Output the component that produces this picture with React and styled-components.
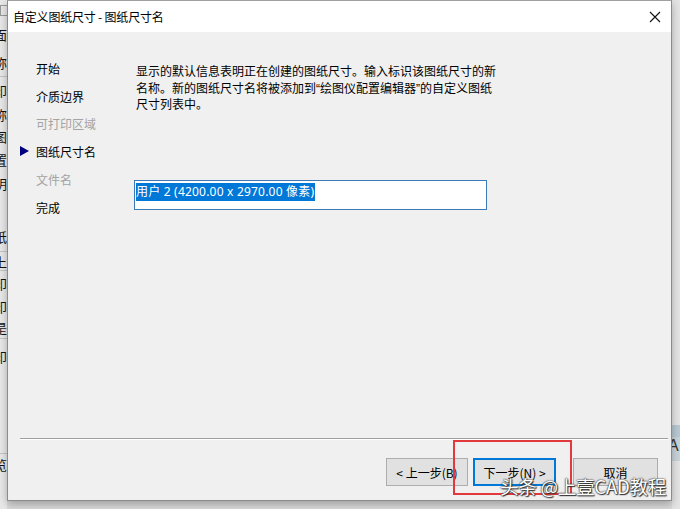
import React from 'react';
import styled, { createGlobalStyle } from 'styled-components';

const GlobalStyle = createGlobalStyle`
    html, body {
        margin: 0;
        padding: 0;
        background: #dcdcdc;
        font-family: "Noto Sans CJK SC", "Noto Sans", "Liberation Sans", sans-serif;
        font-size: 12px;
        color: #000;
    }
`;

const backdropRows = [
    { h: 20, t: '' , box: true },
    { h: 28, t: '面' },
    { h: 28, t: '称', line: true },
    { h: 27, t: '印' },
    { h: 20, t: '称' },
    { h: 24, t: '图' },
    { h: 23, t: '置' },
    { h: 25, t: '明' },
    { h: 25, t: '' },
    { h: 30, t: '纸', line: true },
    { h: 18, t: '上', line: true },
    { h: 25, t: '印' },
    { h: 20, t: '印' },
    { h: 22, t: '是', line: true },
    { h: 34, t: '印' },
    { h: 80, t: '', line: true },
    { h: 20, t: '览' },
];

const steps = [
    { label: '开始' },
    { label: '介质边界' },
    { label: '可打印区域', disabled: true },
    { label: '图纸尺寸名', current: true },
    { label: '文件名', disabled: true },
    { label: '完成' },
];

const App = () => {
    return (
        <>
            <GlobalStyle />
            <Page>
                <LeftStrip>
                    {backdropRows.map((r, i) => (
                        <BackRow key={i} $h={r.h} $line={r.line}>
                            {r.box ? <TinyBox /> : r.t}
                        </BackRow>
                    ))}
                </LeftStrip>

                <Dialog>
                    <TitleBar>
                        <Title>自定义图纸尺寸 - 图纸尺寸名</Title>
                        <CloseButton aria-label="close">
                            <svg width="12" height="12" viewBox="0 0 12 12">
                                <path d="M1 1 L11 11 M11 1 L1 11" stroke="#111" strokeWidth="1.1" fill="none" />
                            </svg>
                        </CloseButton>
                    </TitleBar>

                    <Body>
                        <Nav>
                            {steps.map((s) => (
                                <NavItem key={s.label} $disabled={s.disabled}>
                                    <Marker>
                                        {s.current && (
                                            <svg width="9" height="10" viewBox="0 0 9 10">
                                                <path d="M0 0 L9 5 L0 10 Z" fill="#00007f" />
                                            </svg>
                                        )}
                                    </Marker>
                                    {s.label}
                                </NavItem>
                            ))}
                        </Nav>

                        <Content>
                            <Description>
                                显示的默认信息表明正在创建的图纸尺寸。输入标识该图纸尺寸的新名称。新的图纸尺寸名将被添加到<Quote>“</Quote>绘图仪配置编辑器<Quote>”</Quote>的自定义图纸尺寸列表中。
                            </Description>
                            <NameInput>
                                <Selected>用户 2 (4200.00 x 2970.00 像素)</Selected>
                            </NameInput>
                        </Content>
                    </Body>

                    <Footer>
                        <Separator />
                        <ButtonRow>
                            <Button $w={82}>&lt; 上一步(B)</Button>
                            <Button $w={83} $default>下一步(N) &gt;</Button>
                            <Button $w={85} $gap={17}>取消</Button>
                        </ButtonRow>
                    </Footer>

                    <Highlight />
                    <Watermark>头条 @上壹CAD教程</Watermark>
                </Dialog>

                <RightStrip>
                    <RightBand />
                    <RightGlyph>A</RightGlyph>
                </RightStrip>
            </Page>
        </>
    );
}

const Page = styled.div`
    display: flex;
    width: 680px;
    height: 509px;
    overflow: hidden;
    background: #d9d9d9;
`;

const LeftStrip = styled.div`
    width: 7px;
    flex-shrink: 0;
    background: #e8e8e8;
    display: flex;
    flex-direction: column;
    overflow: hidden;
`;

const BackRow = styled.div`
    height: ${p => p.$h}px;
    flex-shrink: 0;
    display: flex;
    align-items: center;
    justify-content: flex-end;
    font-size: 13px;
    color: #111;
    white-space: nowrap;
    border-bottom: ${p => p.$line ? '1px solid #c4c4c4' : 'none'};
`;

const TinyBox = styled.span`
    width: 9px;
    height: 9px;
    border: 1px solid #999;
    margin-right: -4px;
`;

const Dialog = styled.div`
    position: relative;
    width: 665px;
    height: 501px;
    flex-shrink: 0;
    box-sizing: border-box;
    border: 1px solid #8c8c8c;
    border-top-color: #a0a0a0;
    background: #f0f0f0;
    display: flex;
    flex-direction: column;
    box-shadow: 0 3px 8px rgba(0, 0, 0, 0.28);
`;

const TitleBar = styled.div`
    height: 31px;
    flex-shrink: 0;
    background: #fff;
    display: flex;
    align-items: center;
    justify-content: space-between;
    padding: 0 9px 0 5px;
`;

const Title = styled.span`
    font-size: 12px;
    color: #000;
    letter-spacing: -0.2px;
`;

const CloseButton = styled.div`
    width: 14px;
    height: 14px;
    display: flex;
    align-items: center;
    justify-content: center;
`;

const Body = styled.div`
    flex: 1;
    display: flex;
`;

const Nav = styled.div`
    width: 126px;
    flex-shrink: 0;
    padding: 22.5px 0 0 12px;
    box-sizing: border-box;
    display: flex;
    flex-direction: column;
`;

const NavItem = styled.div`
    height: 27.8px;
    display: flex;
    align-items: center;
    font-size: 12px;
    color: ${p => p.$disabled ? '#a3a3a3' : '#000'};
    white-space: nowrap;
`;

const Marker = styled.span`
    width: 16px;
    display: flex;
    align-items: center;
    margin-top: -2px;
`;

const Content = styled.div`
    display: flex;
    flex-direction: column;
    padding-top: 31px;
`;

const Description = styled.p`
    margin: 0 0 0 2px;
    width: 362px;
    height: 50px;
    font-size: 12px;
    line-height: 16.5px;
    color: #000;
`;

const Quote = styled.span`
    font-family: "Liberation Sans", sans-serif;
    line-height: 1;
`;

const NameInput = styled.div`
    margin-top: 67px;
    width: 353px;
    height: 30px;
    box-sizing: border-box;
    border: 1px solid #3d7ab8;
    background: #fff;
    padding: 1px 0 0 1px;
`;

const Selected = styled.span`
    display: inline-block;
    background: #0078d7;
    color: #fff;
    font-family: "Noto Sans", "Noto Sans CJK SC", sans-serif;
    font-size: 12px;
    line-height: 18px;
    padding-right: 1px;
    letter-spacing: 0.2px;
`;

const Footer = styled.div`
    display: flex;
    flex-direction: column;
    flex-shrink: 0;
`;

const Separator = styled.div`
    height: 1px;
    margin: 0 3px 0 12px;
    background: #a0a0a0;
    border-bottom: 1px solid #fff;
`;

const ButtonRow = styled.div`
    display: flex;
    justify-content: flex-end;
    padding: 18px 13px 14px 0;
`;

const Button = styled.div`
    width: ${p => p.$w}px;
    height: 28px;
    margin-left: ${p => p.$gap || 5}px;
    box-sizing: border-box;
    background: #e1e1e1;
    border: ${p => p.$default ? '2px solid #0078d7' : '1px solid #adadad'};
    display: flex;
    align-items: center;
    justify-content: center;
    font-size: 12px;
    color: #000;
    white-space: nowrap;
`;

const Highlight = styled.div`
    position: absolute;
    left: 445px;
    top: 439px;
    width: 119px;
    height: 55px;
    box-sizing: border-box;
    border: 2px solid #e23a3c;
    pointer-events: none;
`;

const Watermark = styled.div`
    position: absolute;
    left: 492px;
    top: 474px;
    font-size: 18.6px;
    line-height: 22px;
    color: #fff;
    white-space: nowrap;
    text-shadow: 0 0 1px #222, 0 0 2px #333, 1px 1px 1px #333;
    letter-spacing: -0.3px;
    pointer-events: none;
`;

const RightStrip = styled.div`
    flex: 1;
    background: #e4e4e4;
    display: flex;
    flex-direction: column;
    padding-top: 425px;
    overflow: hidden;
`;

const RightBand = styled.div`
    height: 12px;
    background: #b9c8d2;
`;

const RightGlyph = styled.div`
    height: 24px;
    background: #c8d3da;
    font-family: "Liberation Sans", sans-serif;
    font-size: 16px;
    margin-left: -4px;
    color: #333;
`;

export default App;
